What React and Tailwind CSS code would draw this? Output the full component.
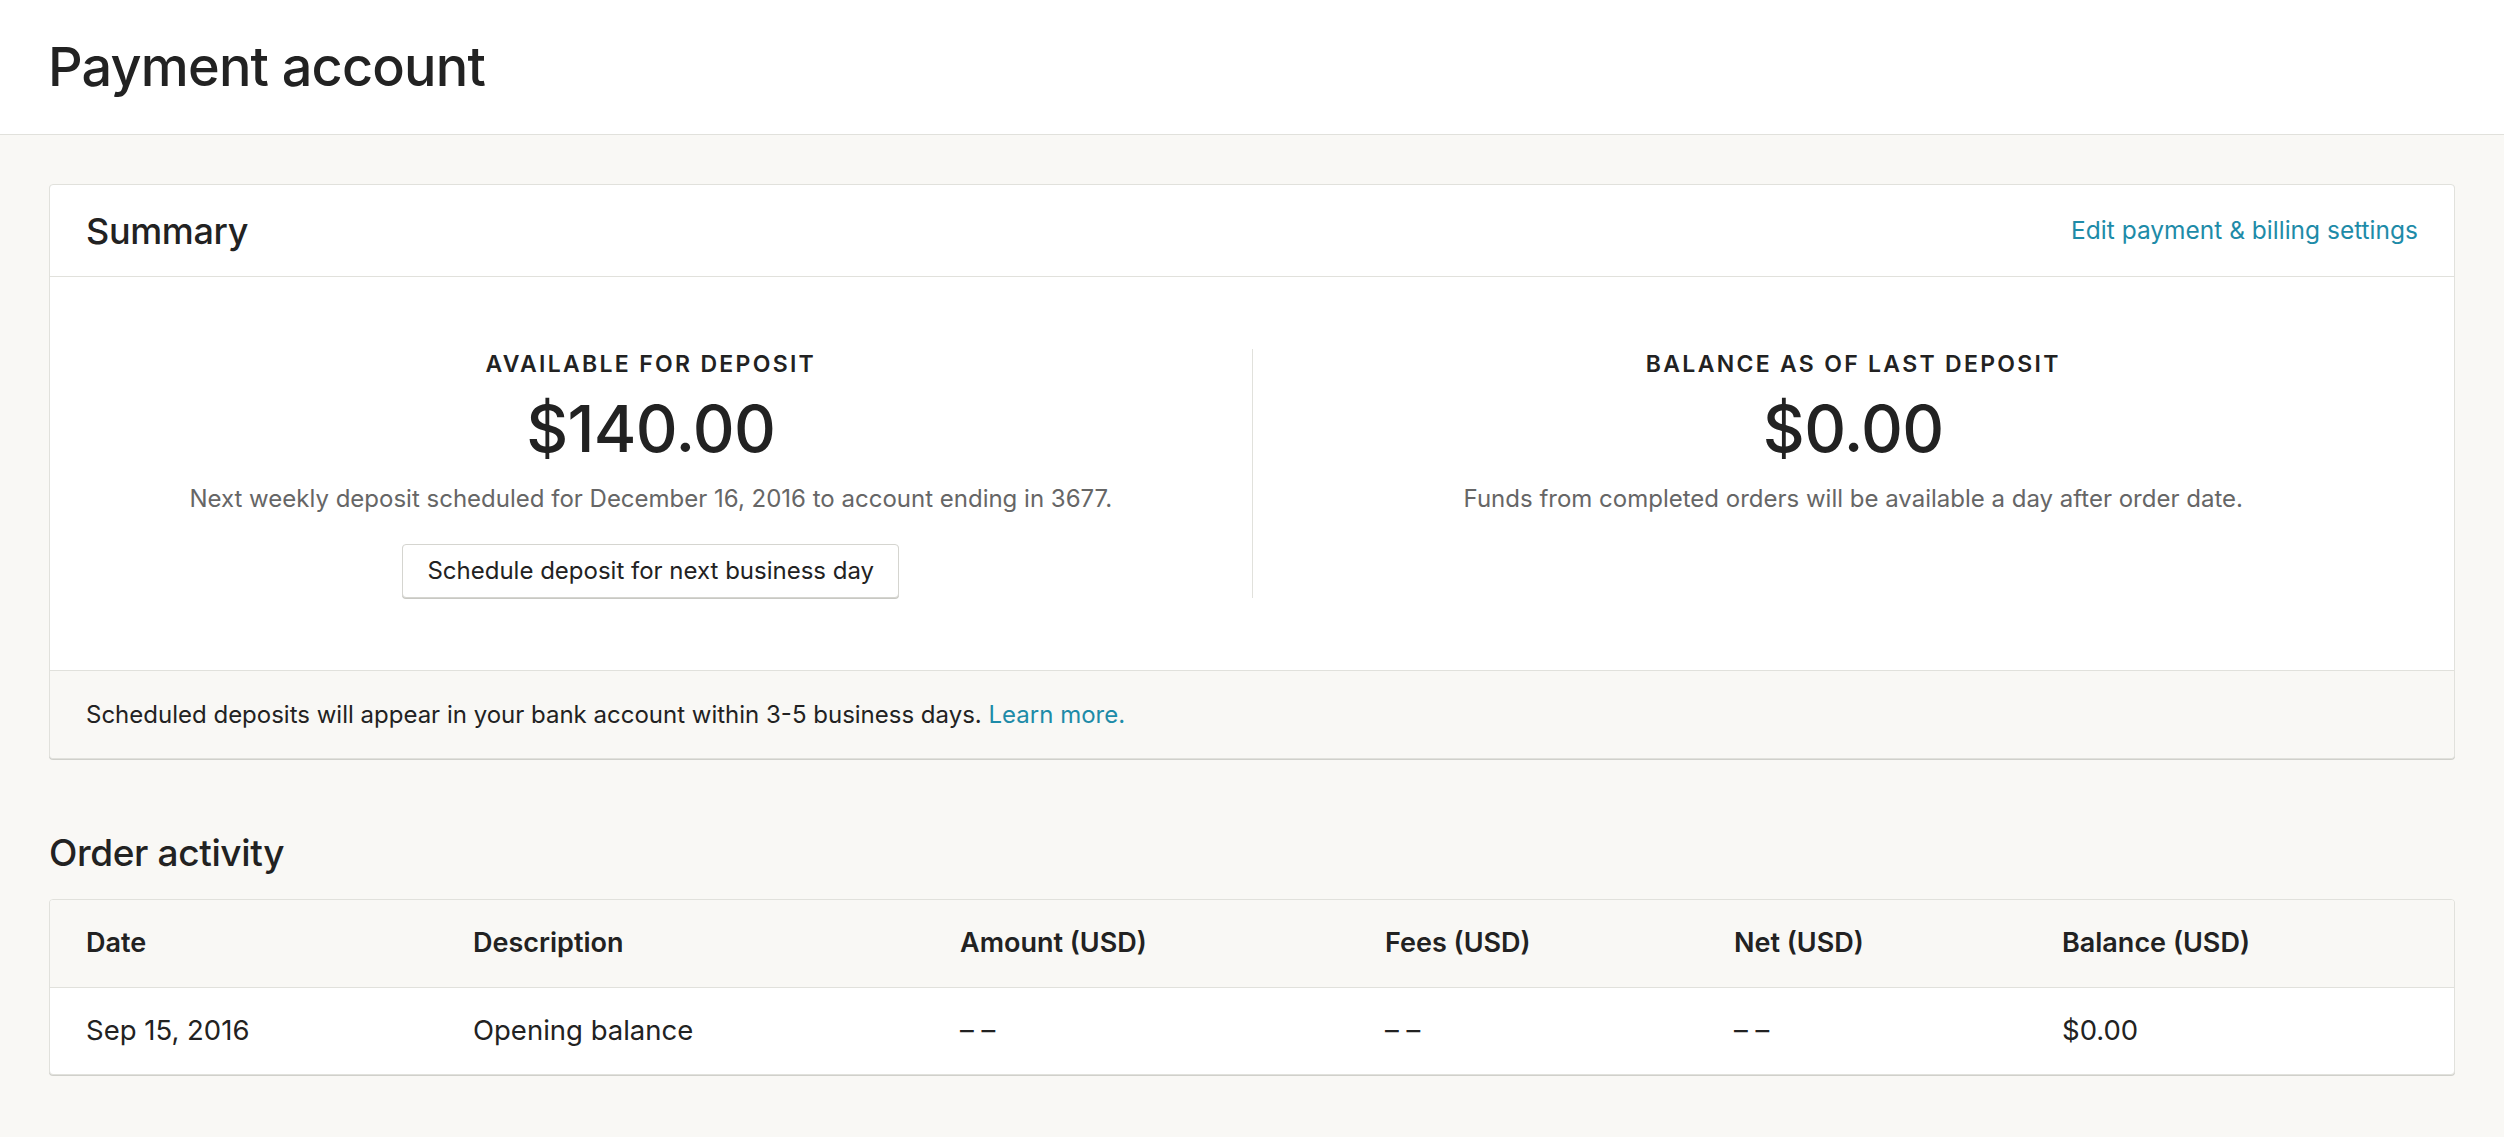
import React from 'react';

const font = { fontFamily: 'Inter, "Noto Sans", sans-serif' };

const columns = ['Date', 'Description', 'Amount (USD)', 'Fees (USD)', 'Net (USD)', 'Balance (USD)'];
const rows = [['Sep 15, 2016', 'Opening balance', '– –', '– –', '– –', '$0.00']];

const gridCols = 'grid grid-cols-[387px_487px_425px_349px_328px_1fr]';

const App = () => {
    return (
        <div className="min-h-screen bg-[#f9f8f5] text-[#222222]" style={font}>
            <header className="h-[135px] bg-white border-b border-[#e1e1dc] flex items-center px-[48px]">
                <h1 className="text-[54px] leading-none font-medium tracking-[-0.015em]">Payment account</h1>
            </header>

            <main className="px-[49px] pt-[49px] pb-[60px]">
                <section className="bg-white border border-[#e1e1dc] rounded-[4px] shadow-[0_1px_0_#d0d0cb]">
                    <div className="h-[92px] border-b border-[#e1e1dc] flex items-center justify-between px-[36px]">
                        <h2 className="text-[36px] leading-none font-medium tracking-[-0.01em]">Summary</h2>
                        <a href="#" className="text-[24.5px] text-[#1e8ba8]">Edit payment &amp; billing settings</a>
                    </div>

                    <div className="flex py-[72px]">
                        <div className="flex-1 flex flex-col items-center">
                            <div className="text-[23px] leading-[30px] font-semibold tracking-[0.1em] uppercase">Available for deposit</div>
                            <div className="mt-[12px] text-[65px] leading-[76px] font-medium tracking-[-0.01em]">$140.00</div>
                            <p className="mt-[16px] text-[24px] leading-[32px] text-[#666666]">
                                Next weekly deposit scheduled for December 16, 2016 to account ending in 3677.
                            </p>
                            <button className="mt-[29px] h-[54px] px-[24px] bg-white border border-[#d5d5d0] rounded-[4px] shadow-[0_1px_0_#c8c8c3] text-[24px] text-[#222222]">
                                Schedule deposit for next business day
                            </button>
                        </div>
                        <div className="flex-1 flex flex-col items-center border-l border-[#e1e1dc]">
                            <div className="text-[23px] leading-[30px] font-semibold tracking-[0.1em] uppercase">Balance as of last deposit</div>
                            <div className="mt-[12px] text-[65px] leading-[76px] font-medium tracking-[-0.01em]">$0.00</div>
                            <p className="mt-[16px] text-[24px] leading-[32px] text-[#666666]">
                                Funds from completed orders will be available a day after order date.
                            </p>
                        </div>
                    </div>

                    <div className="h-[88px] border-t border-[#e1e1dc] bg-[#f9f8f5] flex items-center px-[36px] rounded-b-[4px]">
                        <p className="text-[24px]">
                            Scheduled deposits will appear in your bank account within 3-5 business days.{' '}
                            <a href="#" className="text-[#1e8ba8]">Learn more.</a>
                        </p>
                    </div>
                </section>

                <h2 className="mt-[74px] text-[37px] leading-[40px] font-medium tracking-[-0.01em]">Order activity</h2>

                <section className="mt-[26px] bg-white border border-[#e1e1dc] rounded-[4px] shadow-[0_1px_0_#d0d0cb] overflow-hidden">
                    <div className={`${gridCols} h-[88px] bg-[#f9f8f5] border-b border-[#e1e1dc] items-center`}>
                        {columns.map(c => (
                            <div key={c} className="pl-[36px] text-[27px] font-semibold">{c}</div>
                        ))}
                    </div>
                    {rows.map((r, i) => (
                        <div key={i} className={`${gridCols} h-[86px] items-center`}>
                            {r.map((cell, j) => (
                                <div key={j} className="pl-[36px] text-[27.5px]">{cell}</div>
                            ))}
                        </div>
                    ))}
                </section>
            </main>
        </div>
    );
};

export default App;
